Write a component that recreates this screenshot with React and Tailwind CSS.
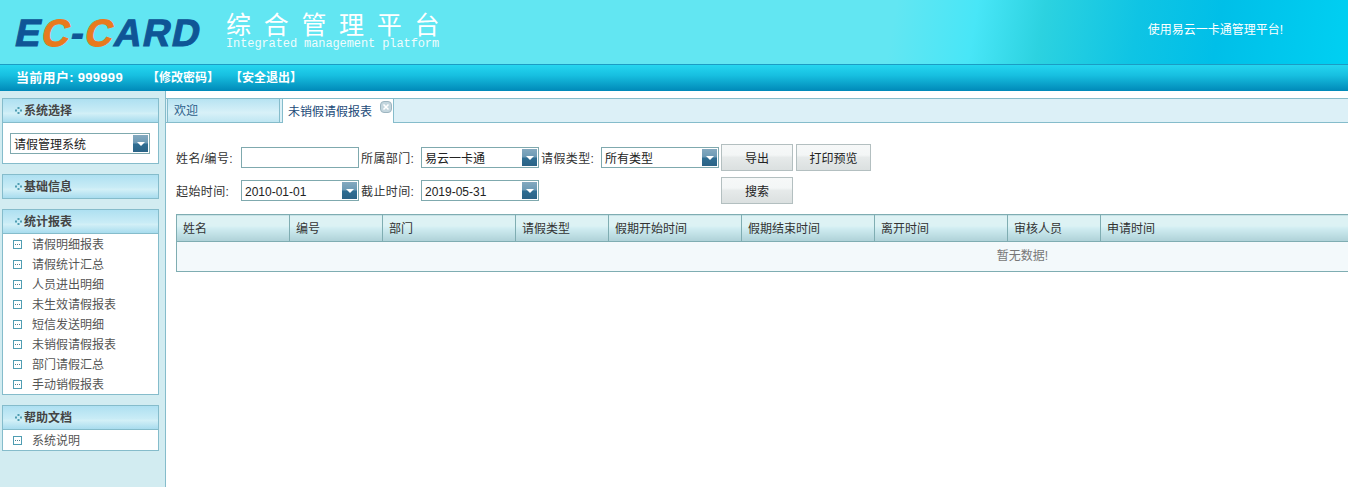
const cjk = "font-['Liberation_Sans','Noto_Sans_CJK_SC',sans-serif]";

const panelHead =
  "flex h-[25px] items-center border border-[#85bccb] bg-[linear-gradient(#aee0f1,#c9ecf6_55%,#d3f0f7_62%,#a8dcee)] pl-[12px] text-xs font-bold text-[#444]";

function Dots() {
  return (
    <svg width="7" height="7" viewBox="0 0 7 7" className="mr-[2px] shrink-0" fill="#4f9db2">
      <rect x="2.5" y="0" width="2" height="2" />
      <rect x="0" y="2.5" width="2" height="2" />
      <rect x="5" y="2.5" width="2" height="2" />
      <rect x="2.5" y="5" width="2" height="2" />
    </svg>
  );
}

function ItemIcon() {
  return (
    <svg width="9" height="9" viewBox="0 0 9 9" className="shrink-0">
      <rect x="0.5" y="0.5" width="8" height="8" fill="#fff" stroke="#4f9db2" />
      <path d="M2 4.500h1M4 4.500h1M6 4.500h1" stroke="#4f7f8f" />
    </svg>
  );
}

function DropButton() {
  return (
    <span className="mr-px flex h-[17px] w-[15px] shrink-0 items-center justify-center bg-[linear-gradient(#84a9bf,#6d9ab5_45%,#2f6d92_55%,#2b6386)]">
      <svg width="8" height="4" viewBox="0 0 8 4">
        <path d="M0 0h8L4 4z" fill="#fff" />
      </svg>
    </span>
  );
}

function Select({ value, width = "w-[118px]" }) {
  return (
    <div className={`flex h-[21px] ${width} items-center justify-between border border-[#7fa9ae] bg-white pl-[3px] text-xs text-[#222]`}>
      <span className="pt-[2px]">{value}</span>
      <DropButton />
    </div>
  );
}

function Label({ children }) {
  return <span className="pt-[2px] text-xs tracking-[0.4px] whitespace-nowrap text-[#333]">{children}</span>;
}

function Btn({ children, width = "w-[72px]" }) {
  return (
    <button className={`h-[27px] ${width} border border-[#b3bfc0] bg-[linear-gradient(#f6f8f8,#f3f6f6_40%,#e6eaea_50%,#dbe0e0)] pt-[2px] text-xs text-[#222]`}>
      {children}
    </button>
  );
}

function Panel({ title, items, children }) {
  return (
    <section>
      <h3 className={panelHead}>
        <Dots />
        {title}
      </h3>
      {items && (
        <ul className="border-x border-b border-[#85bccb] bg-white">
          {items.map((it) => (
            <li key={it} className="flex h-5 items-center gap-[10px] pl-[10px] text-xs text-[#555]">
              <ItemIcon />
              <span className="pt-px">{it}</span>
            </li>
          ))}
        </ul>
      )}
      {children}
    </section>
  );
}

const columns = [
  ["姓名", "w-[113px]"],
  ["编号", "w-[93px]"],
  ["部门", "w-[133px]"],
  ["请假类型", "w-[93px]"],
  ["假期开始时间", "w-[133px]"],
  ["假期结束时间", "w-[133px]"],
  ["离开时间", "w-[133px]"],
  ["审核人员", "w-[93px]"],
  ["申请时间", "w-[768px]"],
];

const reports = [
  "请假明细报表",
  "请假统计汇总",
  "人员进出明细",
  "未生效请假报表",
  "短信发送明细",
  "未销假请假报表",
  "部门请假汇总",
  "手动销假报表",
];

export default function App() {
  return (
    <div className={`flex h-[487px] w-[1348px] flex-col overflow-hidden bg-white ${cjk}`}>
      <header className="flex h-[65px] shrink-0 items-start justify-between border-b border-[#1b9cc4] bg-[linear-gradient(100deg,#62e6f2_0%,#62e6f2_66%,#48e6f7_72%,#2cd2e0_77%,#0fc4e4_84%,#00bfe8_90%,#00d0f2_100%)]">
        <div className="flex">
          <div className="mt-[13px] ml-[16px] w-[194px] -skew-x-12 font-['Liberation_Sans'] text-[38px] leading-[40px] font-bold tracking-[1.5px] whitespace-nowrap text-[#0f5596] [-webkit-text-stroke:1px_currentColor]">
            E<span className="text-[#e87a1d]">C</span>-<span className="text-[#e87a1d]">C</span>ARD
          </div>
          <div className="mt-[13px] ml-[16px] text-white">
            <div className="text-[25px] leading-[25px] tracking-[12.7px] whitespace-nowrap">
              综合管理平台
            </div>
            <div className="font-['Liberation_Mono',monospace] text-xs leading-[12px] tracking-[-0.1px] whitespace-nowrap opacity-90">
              Integrated management platform
            </div>
          </div>
        </div>
        <p className="mt-[22px] mr-[65px] text-xs leading-[16px] text-white">使用易云一卡通管理平台!</p>
      </header>

      <nav className="flex h-[26px] shrink-0 items-center bg-[linear-gradient(#25d6f0,#17bfe0_40%,#0089b8)] pl-[16px] text-xs font-bold text-white">
        <span className="w-[131px] text-[13px] tracking-[0.3px]">当前用户: 999999</span>
        <span className="w-[83px]">【修改密码】</span>
        <span>【安全退出】</span>
      </nav>

      <div className="flex min-h-0 flex-1">
        <aside className="flex w-[166px] shrink-0 flex-col gap-[10px] border-r border-[#85bccb] bg-[#d2ecf1] pt-[7px] pr-[6px] pl-[2px]">
          <Panel title="系统选择">
            <div className="h-[41px] border-x border-b border-[#85bccb] bg-white px-[7px] pt-[10px]">
              <Select value="请假管理系统" width="w-[140px]" />
            </div>
          </Panel>
          <Panel title="基础信息" />
          <Panel title="统计报表" items={reports} />
          <Panel title="帮助文档" items={["系统说明"]} />
        </aside>

        <main className="min-w-0 flex-1 overflow-hidden pt-[7px]">
          <div className="flex h-[25px] border-y border-[#85bccb] bg-[#dcf0f7] pl-px">
            <div className="flex w-[113px] items-center border-x border-[#85bccb] bg-[linear-gradient(#b7e3f2,#d8f1f8_60%,#bfe6f2)] pt-px pl-[6px] text-xs text-[#2d5f8a]">
              欢迎
            </div>
            <div className="relative ml-[2px] mb-[-1px] flex w-[112px] items-center border-x border-[#85bccb] bg-white pt-px pl-[5px] text-xs text-[#224a78]">
              未销假请假报表
              <svg width="12" height="12" viewBox="0 0 12 12" className="absolute top-[2px] right-[1px]">
                <rect x="0.500" y="0.500" width="11" height="11" rx="3.500" fill="#c4d6de" stroke="#9db5c0" />
                <path d="M3.500 3.500l5 5M8.500 3.500l-5 5" stroke="#fff" strokeWidth="1.600" />
              </svg>
            </div>
          </div>

          <div className="pt-[21px] pl-[10px]">
            <div className="grid grid-cols-[65px_120px_60px_120px_60px_120px_75px_75px] items-center gap-y-[6px]">
              <Label>姓名/编号:</Label>
              <input className="h-[21px] w-[118px] border border-[#7fa9ae] bg-white" />
              <Label>所属部门:</Label>
              <Select value="易云一卡通" />
              <Label>请假类型:</Label>
              <Select value="所有类型" />
              <Btn>导出</Btn>
              <Btn width="w-[75px]">打印预览</Btn>

              <Label>起始时间:</Label>
              <Select value="2010-01-01" />
              <Label>截止时间:</Label>
              <Select value="2019-05-31" />
              <span className="col-span-2" />
              <Btn>搜索</Btn>
            </div>

            <table className="mt-[10px] w-[1692px] table-fixed border-collapse text-xs">
              <thead>
                <tr>
                  {columns.map(([name, w]) => (
                    <th
                      key={name}
                      className={`${w} h-[27px] border border-[#7fadb2] bg-[linear-gradient(#def2f4,#dcf2f4_40%,#cfecf1_50%,#aed1d7)] pt-[2px] pl-[6px] text-left font-normal text-[#333]`}
                    >
                      {name}
                    </th>
                  ))}
                </tr>
              </thead>
              <tbody>
                <tr>
                  <td colSpan={9} className="h-[30px] border border-[#7fadb2] bg-[#f3f9fb] pb-px text-center text-[#777]">
                    暂无数据!
                  </td>
                </tr>
              </tbody>
            </table>
          </div>
        </main>
      </div>
    </div>
  );
}
